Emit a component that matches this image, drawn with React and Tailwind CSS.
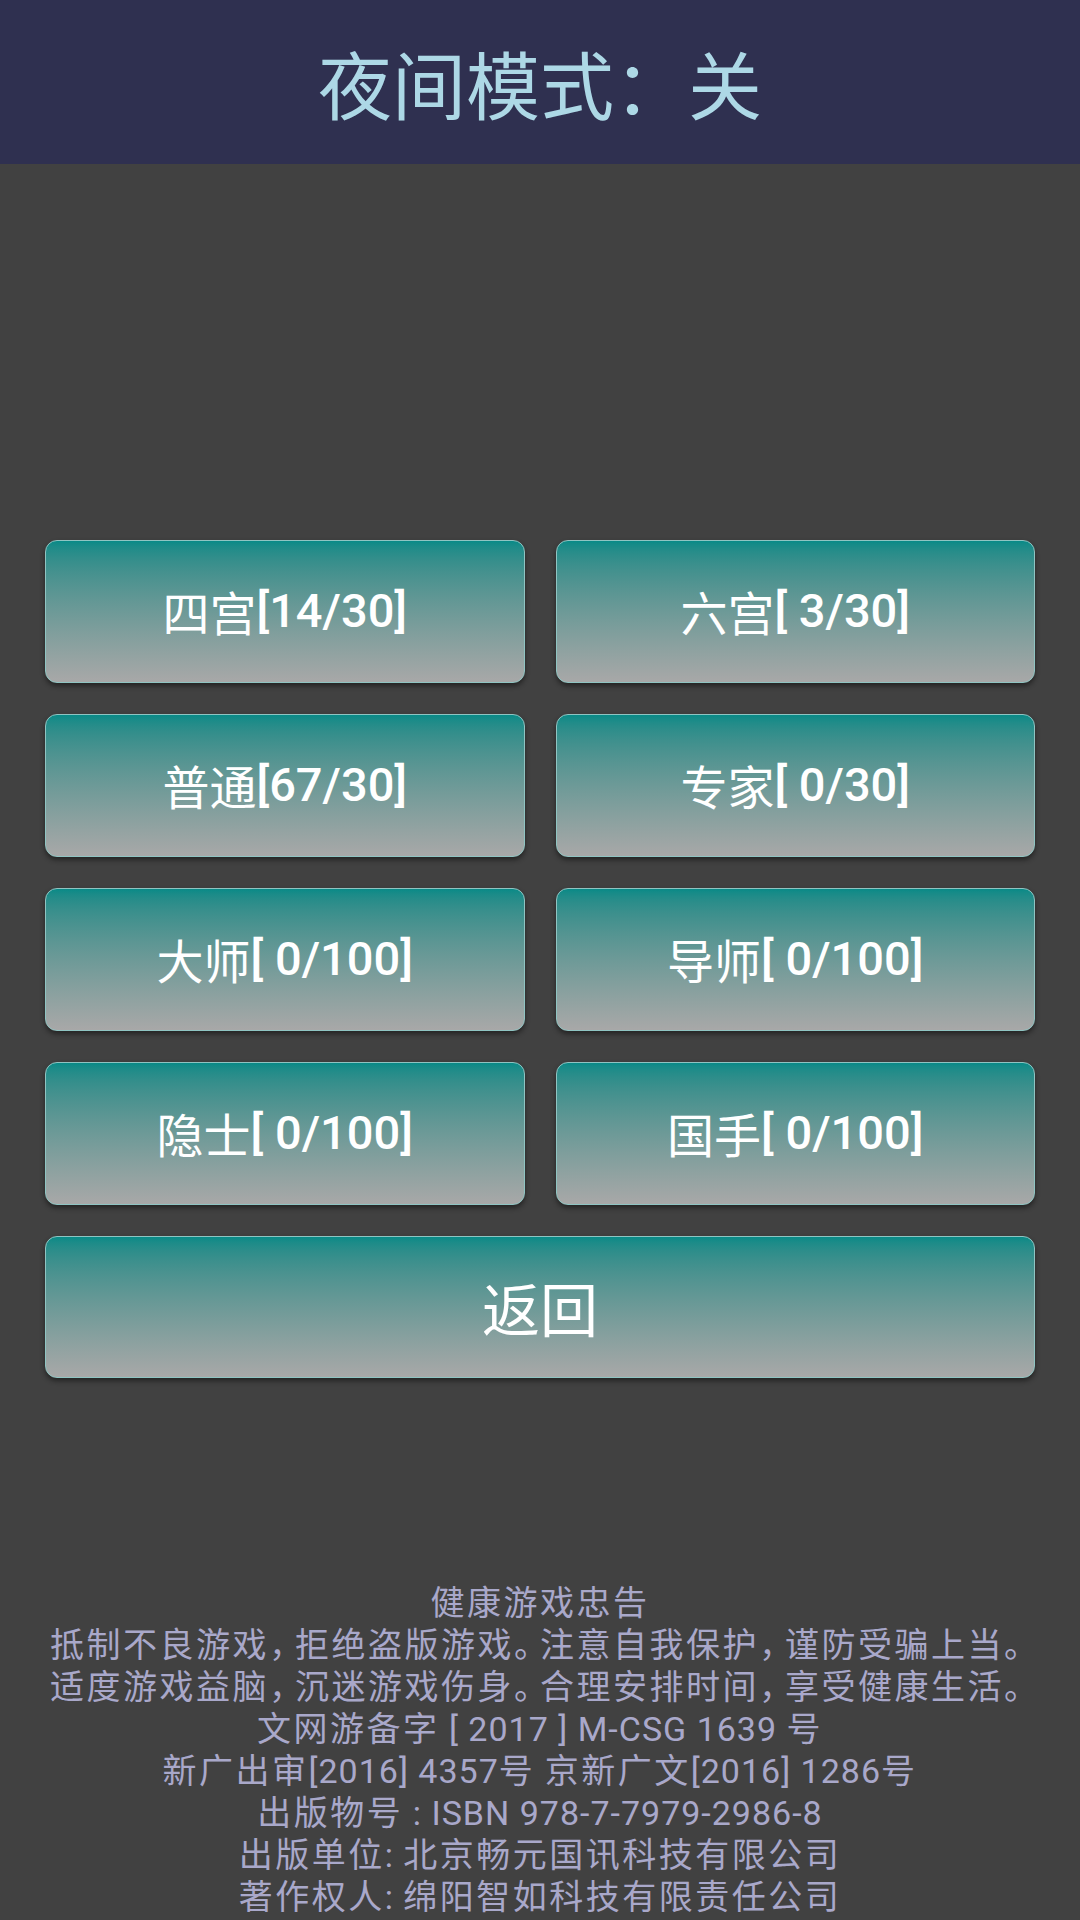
import React from "react";

function Btn({ cjk, num, big, wide }) {
  return (
    <div
      className={
        "flex items-center justify-center rounded-[12px] border border-[#8fc4c2] bg-gradient-to-b from-[#078a87] to-[#a8a8a8] text-white shadow-[0_3px_5px_rgba(0,0,0,0.45)] " +
        (wide ? "col-span-2 h-[142px]" : "h-[143px]")
      }
    >
      <span
        className={"font-['Noto_Sans_CJK_SC',sans-serif] font-normal " + (big ? "text-[58px]" : "text-[47px]")}
      >
        {cjk}
      </span>
      {num && (
        <span className="font-['Roboto','Noto_Sans_CJK_SC',sans-serif] text-[47px] font-medium whitespace-pre">
          {num}
        </span>
      )}
    </div>
  );
}

function Line({ text }) {
  const parts = text.split(/([，。]|[\u3400-\u9fff]+)/).filter((p) => p !== "");
  return (
    <div className="whitespace-pre">
      {parts.map((p, i) => {
        if (p === "，" || p === "。") {
          return (
            <span key={i} className="tracking-[-8px]">
              {p}
            </span>
          );
        }
        if (/[\u3400-\u9fff]/.test(p)) {
          return (
            <span key={i} className="tracking-[2.5px]">
              {p}
            </span>
          );
        }
        return (
          <span key={i} className="tracking-[1px]">
            {p}
          </span>
        );
      })}
    </div>
  );
}

export default function App() {
  const lines = [
    "健康游戏忠告",
    "抵制不良游戏，拒绝盗版游戏。注意自我保护，谨防受骗上当。",
    "适度游戏益脑，沉迷游戏伤身。合理安排时间，享受健康生活。",
    "文网游备字 [ 2017 ] M-CSG 1639 号",
    "新广出审[2016] 4357号 京新广文[2016] 1286号",
    "出版物号 : ISBN 978-7-7979-2986-8",
    "出版单位: 北京畅元国讯科技有限公司",
    "著作权人: 绵阳智如科技有限责任公司",
  ];
  return (
    <div className="flex h-[1920px] w-[1080px] flex-col overflow-hidden bg-[#414141]">
      <div className="flex h-[164px] shrink-0 items-center justify-center bg-[#2f3050]">
        <span className="font-['Noto_Sans_CJK_SC',sans-serif] text-[74px] leading-none text-[#add8e6]">
          夜间模式：关
        </span>
      </div>
      <div className="mt-[376px] grid grid-cols-2 gap-x-[31px] gap-y-[31px] px-[45px]">
        <Btn cjk="四宫" num="[14/30]" />
        <Btn cjk="六宫" num="[ 3/30]" />
        <Btn cjk="普通" num="[67/30]" />
        <Btn cjk="专家" num="[ 0/30]" />
        <Btn cjk="大师" num="[ 0/100]" />
        <Btn cjk="导师" num="[ 0/100]" />
        <Btn cjk="隐士" num="[ 0/100]" />
        <Btn cjk="国手" num="[ 0/100]" />
        <Btn cjk="返回" big wide />
      </div>
      <div className="mt-auto flex flex-col items-center pb-[2px] font-['Roboto','Noto_Sans_CJK_SC',sans-serif] text-[34px] leading-[42px] text-[#a9a8ca]">
        {lines.map((l, i) => (
          <Line key={i} text={l} />
        ))}
      </div>
    </div>
  );
}
